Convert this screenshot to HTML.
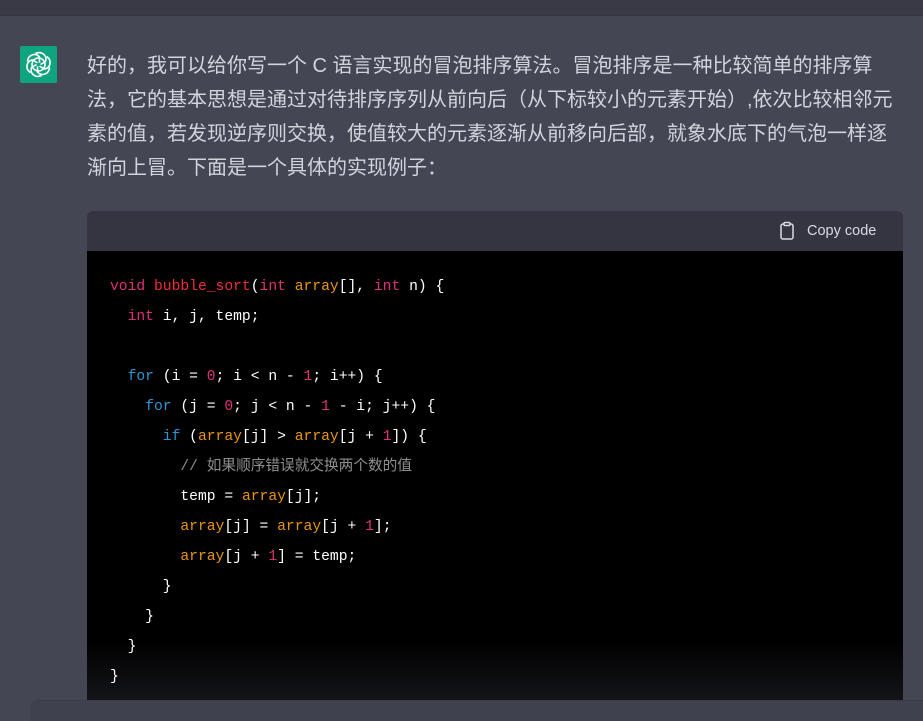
<!DOCTYPE html>
<html><head><meta charset="utf-8"><style>
html,body{margin:0;padding:0;}
body{width:923px;height:708px;overflow:hidden;background:#444654;position:relative;font-family:"Liberation Sans","Noto Sans CJK SC",sans-serif;}
.top{position:absolute;left:0;top:0;width:923px;height:15px;background:#393a45;border-bottom:1px solid #33343e;}
.logo{position:absolute;left:20px;top:46px;width:37px;height:37px;background:#10a37f;border-radius:2px;}
.txt{position:absolute;left:87px;top:49px;color:#d1d5db;font-size:20px;line-height:34px;white-space:nowrap;}
.code{position:absolute;left:87px;top:211px;width:816px;height:497px;border-radius:6px 6px 0 0;overflow:hidden;}
.hdr{height:40px;background:#343541;position:relative;color:#d9d9e3;font-size:14.5px;}
.hdr span{position:absolute;left:720px;top:12px;}
.body{height:457px;background:linear-gradient(#000 0,#000 390px,#16171c 457px);}
pre{margin:0;padding:21px 0 0 23px;font-family:"Liberation Mono","Noto Sans CJK SC",monospace;font-size:14.67px;line-height:30px;color:#fff;}
.k{color:#df3079}.f{color:#f22c3d}.a{color:#e9950c}.b{color:#2e95d3}.c{color:#8e8e8e}
.bot{position:absolute;left:30px;top:700px;width:900px;height:20px;background:#40414f;border-radius:8px 0 0 0;border-top:1px solid #3a3b47;}
</style></head><body>
<div class="top"></div>
<div class="logo"><svg width="37" height="37" viewBox="0 0 37 37"><g fill="none" stroke="#fff" stroke-width="1.6" transform="translate(18.5 18.5)"><g id="p"><path d="M-3 -11 C3 -14 9 -9 7 -3 L2 0"/></g><path d="M-3 -11 C3 -14 9 -9 7 -3 L2 0" transform="rotate(60)"/><path d="M-3 -11 C3 -14 9 -9 7 -3 L2 0" transform="rotate(120)"/><path d="M-3 -11 C3 -14 9 -9 7 -3 L2 0" transform="rotate(180)"/><path d="M-3 -11 C3 -14 9 -9 7 -3 L2 0" transform="rotate(240)"/><path d="M-3 -11 C3 -14 9 -9 7 -3 L2 0" transform="rotate(300)"/><circle r="6.5"/></g></svg></div>
<div class="txt">好的，我可以给你写一个 C 语言实现的冒泡排序算法。冒泡排序是一种比较简单的排序算<br>法，它的基本思想是通过对待排序序列从前向后（从下标较小的元素开始）,依次比较相邻元<br>素的值，若发现逆序则交换，使值较大的元素逐渐从前移向后部，就象水底下的气泡一样逐<br>渐向上冒。下面是一个具体的实现例子：</div>
<div class="code">
<div class="hdr"><svg style="position:absolute;left:692px;top:10px" width="16" height="20" viewBox="0 0 16 20"><rect x="2" y="3" width="12" height="15" rx="2" fill="none" stroke="#d9d9e3" stroke-width="1.5"/><rect x="5" y="1.5" width="6" height="3" rx="1" fill="#343541" stroke="#d9d9e3" stroke-width="1.5"/></svg><span>Copy code</span></div>
<div class="body"><pre><span class="k">void</span> <span class="f">bubble_sort</span>(<span class="k">int</span> <span class="a">array</span>[], <span class="k">int</span> n) {
  <span class="k">int</span> i, j, temp;

  <span class="b">for</span> (i = <span class="k">0</span>; i &lt; n - <span class="k">1</span>; i++) {
    <span class="b">for</span> (j = <span class="k">0</span>; j &lt; n - <span class="k">1</span> - i; j++) {
      <span class="b">if</span> (<span class="a">array</span>[j] &gt; <span class="a">array</span>[j + <span class="k">1</span>]) {
        <span class="c">// 如果顺序错误就交换两个数的值</span>
        temp = <span class="a">array</span>[j];
        <span class="a">array</span>[j] = <span class="a">array</span>[j + <span class="k">1</span>];
        <span class="a">array</span>[j + <span class="k">1</span>] = temp;
      }
    }
  }
}</pre></div>
</div>
<div class="bot"></div>
</body></html>
